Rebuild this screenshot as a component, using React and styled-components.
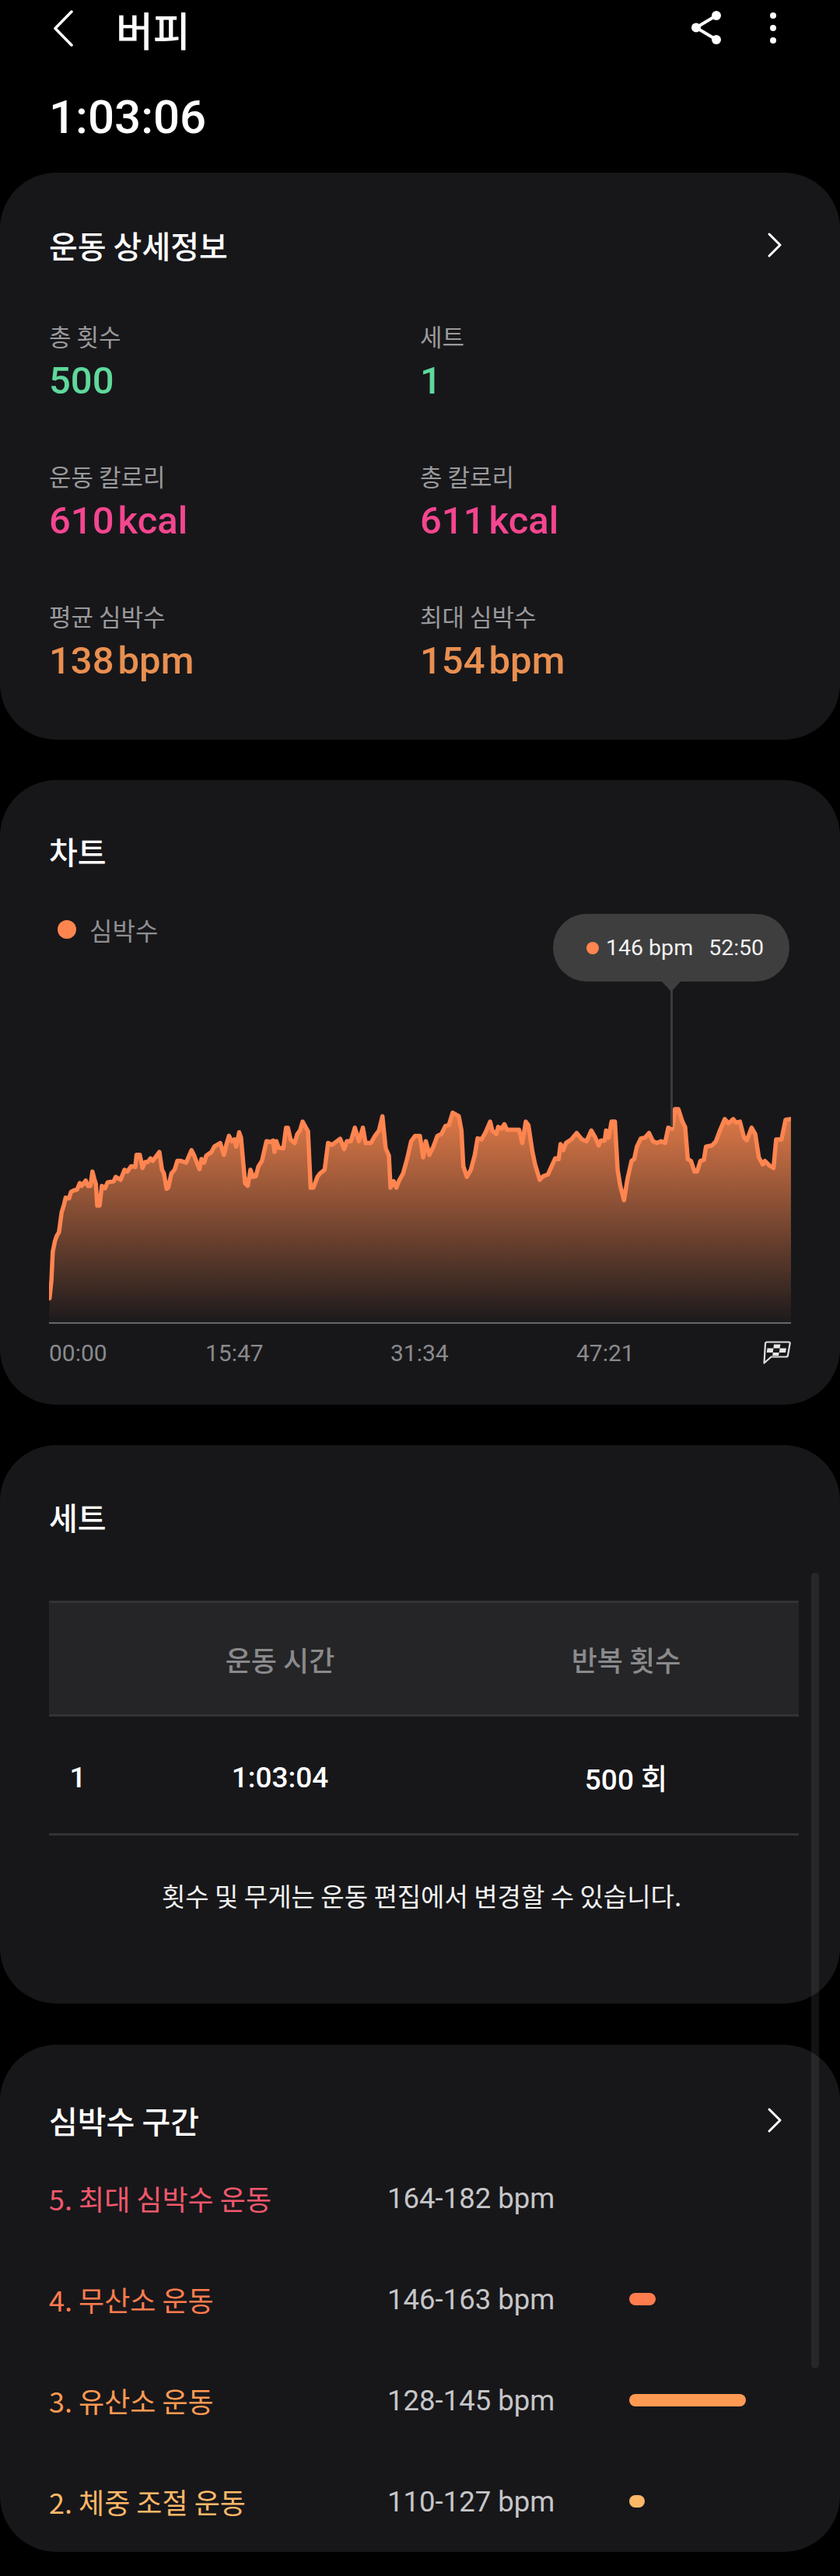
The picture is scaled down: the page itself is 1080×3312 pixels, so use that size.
import React from 'react';
import styled, { createGlobalStyle } from 'styled-components';

const KR = `"Noto Sans CJK KR", "Noto Sans", sans-serif`;
const NUM = `Roboto, "Noto Sans CJK KR", sans-serif`;

const GlobalStyle = createGlobalStyle`
  html, body {
    margin: 0;
    padding: 0;
    background: #000;
  }
  * {
    box-sizing: border-box;
  }
`;

const Page = styled.div`
  position: relative;
  width: 1080px;
  height: 3312px;
  overflow: hidden;
  background: #000;
  font-family: ${KR};
  color: #fff;
`;

const TopBar = styled.div`
  display: flex;
  align-items: center;
  height: 80px;
  padding: 0 0 8px 69px;
`;

const ScreenTitle = styled.h1`
  margin: 3px 0 0 55px;
  font-size: 52px;
  font-weight: 500;
  line-height: 60px;
`;

const TopIcons = styled.div`
  display: flex;
  align-items: center;
  gap: 60px;
  margin-left: auto;
  padding-right: 81px;
`;

const Duration = styled.div`
  margin: 36px 0 36px 63px;
  font-family: ${NUM};
  font-size: 60px;
  font-weight: 500;
  line-height: 70px;
`;

const Card = styled.section`
  margin-bottom: ${(p) => p.$gap || 52}px;
  padding: ${(p) => p.$top}px 63px ${(p) => p.$bottom}px;
  border-radius: 72px;
  background: #17171a;
`;

const CardHeader = styled.div`
  display: flex;
  align-items: center;
  justify-content: space-between;
  height: 50px;
  padding-right: 12px;
`;

const CardTitle = styled.h2`
  margin: 0;
  font-size: 40px;
  font-weight: 500;
  line-height: 50px;
`;

const StatGrid = styled.div`
  display: grid;
  grid-template-columns: 477px 1fr;
  row-gap: 72px;
  margin-top: 72px;
`;

const Stat = styled.div`
  display: flex;
  flex-direction: column;
  gap: 8px;
`;

const StatLabel = styled.span`
  font-size: 31px;
  line-height: 40px;
  color: #9a9a9c;
`;

const StatValue = styled.span`
  display: flex;
  gap: 5px;
  font-family: ${NUM};
  font-size: 49px;
  font-weight: 500;
  line-height: 60px;
  color: ${(p) => p.$color};
`;

const ChartArea = styled.div`
  position: relative;
  margin-top: 56px;
`;

const Legend = styled.div`
  display: flex;
  align-items: center;
  gap: 17px;
  height: 40px;
  padding-left: 11px;
  font-size: 32px;
  color: #8f8f91;
`;

const Dot = styled.span`
  flex: none;
  width: ${(p) => p.$size}px;
  height: ${(p) => p.$size}px;
  border-radius: 50%;
  background: #ff8550;
`;

const Tooltip = styled.div`
  position: absolute;
  top: 0;
  left: 648px;
  display: flex;
  align-items: center;
  gap: 9px;
  width: 304px;
  height: 87px;
  padding-left: 43px;
  border-radius: 44px;
  background: #3e3e3f;
  font-family: ${NUM};
  font-size: 28.5px;
  color: #f2f2f2;

  &::after {
    content: '';
    position: absolute;
    left: 140px;
    top: 87px;
    border-left: 12px solid transparent;
    border-right: 12px solid transparent;
    border-top: 13px solid #3e3e3f;
  }
`;

const TooltipTime = styled.span`
  margin-left: 11px;
`;

const TooltipLine = styled.div`
  position: absolute;
  top: 98px;
  left: 799px;
  width: 3px;
  height: 176px;
  background: #3c3c3e;
`;

const Plot = styled.svg`
  display: block;
  margin-top: 185px;
`;

const AxisRow = styled.div`
  display: grid;
  grid-template-columns: 201px 238px 239px 240px 1fr;
  align-items: center;
  height: 40px;
  margin-top: 16px;
  font-family: ${NUM};
  font-size: 30px;
  color: #8a8a8c;
`;

const Table = styled.div`
  width: 964px;
  margin-top: 83px;
`;

const TableRow = styled.div`
  display: grid;
  grid-template-columns: 74px 446px 1fr;
  align-items: center;
  height: ${(p) => p.$height}px;
  border-bottom: 3px solid #333335;
  text-align: center;
`;

const TableHead = styled(TableRow)`
  border-top: 3px solid #333335;
  background: #252527;
  font-size: 36px;
  font-weight: 500;
  color: #8a8a8c;
`;

const TableBody = styled(TableRow)`
  padding-top: 6px;
  font-family: ${NUM};
  font-size: 37px;
  font-weight: 500;
`;

const Note = styled.p`
  margin: 57px 0 0;
  padding-left: 4px;
  font-size: 33px;
  line-height: 40px;
  text-align: center;
  color: #f2f2f2;
`;

const ZoneList = styled.div`
  margin-top: 10px;
`;

const ZoneRow = styled.div`
  display: grid;
  grid-template-columns: 435px 311px 1fr;
  align-items: center;
  height: 130px;
`;

const ZoneName = styled.span`
  font-size: 36px;
  color: ${(p) => p.$color};
`;

const ZoneRange = styled.span`
  font-family: ${NUM};
  font-size: 36.5px;
  color: #c6c6c8;
`;

const ZoneBar = styled.span`
  display: block;
  width: ${(p) => p.$width}px;
  height: 16px;
  margin-top: -1px;
  border-radius: 8px;
  background: ${(p) => p.$color};
`;

const ScrollThumb = styled.div`
  position: absolute;
  top: 2022px;
  left: 1043px;
  width: 10px;
  height: 1023px;
  border-radius: 5px;
  background: rgba(255, 255, 255, 0.07);
`;

const stats = [
  { label: '총 횟수', value: '500', color: '#5fd89b' },
  { label: '세트', value: '1', color: '#5fd89b' },
  { label: '운동 칼로리', value: '610', unit: 'kcal', color: '#f4468f' },
  { label: '총 칼로리', value: '611', unit: 'kcal', color: '#f4468f' },
  { label: '평균 심박수', value: '138', unit: 'bpm', color: '#e98f50' },
  { label: '최대 심박수', value: '154', unit: 'bpm', color: '#e98f50' },
];

const zones = [
  { name: '5. 최대 심박수 운동', range: '164-182 bpm', color: '#f2586c', bar: 0 },
  { name: '4. 무산소 운동', range: '146-163 bpm', color: '#ff7c4e', bar: 34 },
  { name: '3. 유산소 운동', range: '128-145 bpm', color: '#ff9a52', bar: 150 },
  { name: '2. 체중 조절 운동', range: '110-127 bpm', color: '#ffb868', bar: 20 },
];

// heart rate trace, read off the chart at 2.904 x 2.178 scale
const trace = [
  [185,1240],[192,1190],[197,1110],[205,1080],[212,1065],[220,1055],[230,1000],[240,975],[245,958],[258,960],
  [265,942],[275,938],[288,935],[298,917],[305,925],[320,910],[328,925],[338,925],[345,885],[352,905],
  [358,920],[363,980],[372,980],[380,925],[392,932],[402,915],[425,912],[432,900],[450,908],[465,880],
  [475,885],[490,870],[505,872],[510,838],[522,838],[532,875],[542,858],[552,858],[562,848],[570,855],
  [595,830],[605,880],[612,890],[622,933],[628,930],[640,890],[652,880],[662,855],[675,855],[695,860],
  [715,825],[725,840],[735,860],[745,878],[752,850],[762,860],[770,840],[790,830],[800,815],[822,805],
  [836,838],[845,810],[855,785],[865,800],[875,795],[882,815],[893,775],[900,790],[915,918],[925,925],
  [935,880],[945,900],[955,898],[965,870],[978,855],[995,800],[1010,802],[1020,798],[1025,830],[1032,800],
  [1040,818],[1058,820],[1068,762],[1075,762],[1085,795],[1100,805],[1110,780],[1120,770],[1130,745],[1150,772],
  [1160,930],[1170,930],[1185,900],[1195,890],[1212,880],[1225,805],[1240,810],[1270,793],[1285,822],[1295,800],
  [1310,800],[1325,762],[1340,800],[1355,762],[1365,805],[1385,805],[1400,785],[1415,770],[1428,730],[1440,820],
  [1452,840],[1458,930],[1470,912],[1480,930],[1490,910],[1505,890],[1520,850],[1535,800],[1550,785],[1568,785],
  [1580,845],[1590,800],[1603,838],[1618,815],[1633,785],[1648,780],[1663,757],[1676,755],[1690,720],[1713,730],
  [1723,770],[1730,870],[1743,900],[1758,880],[1773,838],[1783,792],[1798,795],[1813,775],[1830,745],[1838,770],
  [1853,780],[1860,760],[1873,765],[1883,752],[1893,768],[1938,768],[1950,805],[1963,745],[1973,755],[1988,830],
  [1998,865],[2015,908],[2028,898],[2046,893],[2073,848],[2086,850],[2093,808],[2103,825],[2113,805],[2133,795],
  [2153,777],[2173,795],[2190,800],[2208,770],[2223,790],[2235,812],[2243,798],[2258,798],[2263,770],[2273,790],
  [2283,745],[2296,745],[2306,880],[2316,925],[2330,965],[2343,905],[2358,855],[2368,850],[2378,815],[2393,792],
  [2408,790],[2423,777],[2438,800],[2453,805],[2468,800],[2483,805],[2495,762],[2510,765],[2520,710],[2533,710],
  [2548,745],[2558,760],[2568,850],[2580,855],[2593,885],[2603,885],[2615,855],[2628,852],[2636,815],[2658,812],
  [2673,800],[2688,770],[2706,738],[2720,750],[2738,738],[2748,748],[2763,745],[2778,790],[2788,797],[2806,762],
  [2820,780],[2833,845],[2848,865],[2856,855],[2873,868],[2888,875],[2898,795],[2918,795],[2933,740],[2953,738],
].map(([x, y]) => [+(x / 2.904 - 63).toFixed(1), +(y / 2.178 - 300).toFixed(1)]);

const linePath = 'M' + trace.map(([x, y]) => `${x} ${y}`).join('L');
const areaPath = `${linePath}L954 301L0 301Z`;

const Chevron = ({ left, width = 18, height = 32, stroke = 3 }) => (
  <svg width={width} height={height} viewBox={`0 0 ${width} ${height}`} fill="none">
    <path
      d={
        left
          ? `M${width - 2} 2L2 ${height / 2}L${width - 2} ${height - 2}`
          : `M2 2L${width - 2} ${height / 2}L2 ${height - 2}`
      }
      stroke="#fff"
      strokeWidth={stroke}
      strokeLinecap="round"
      strokeLinejoin="round"
    />
  </svg>
);

const ShareIcon = () => (
  <svg width="40" height="44" viewBox="0 0 40 44" fill="#fff">
    <path d="M32 6L6 21.500L32 37" fill="none" stroke="#fff" strokeWidth="4" />
    <circle cx="32" cy="6" r="6" />
    <circle cx="6" cy="21.500" r="6" />
    <circle cx="32" cy="37" r="6" />
  </svg>
);

const MoreIcon = () => (
  <svg width="10" height="44" viewBox="0 0 10 44" fill="#fff">
    <circle cx="5" cy="6" r="4" />
    <circle cx="5" cy="22" r="4" />
    <circle cx="5" cy="38" r="4" />
  </svg>
);

const FinishFlag = () => (
  <svg width="36" height="30" viewBox="0 0 36 30">
    <path d="M5 1.500H33Q35 1.500 34.600 3.500L32 18.500Q31.700 20.500 29.500 20.500H10.500L1.500 28.500L3 3.500Q3.200 1.500 5 1.500Z" fill="#17171a" stroke="#ddd" strokeWidth="2.200" strokeLinejoin="round" />
    <path d="M14 4.500H22.500L21.600 9.500H13.400ZM5.500 9.500H13.400L12.700 15H4.800ZM21.600 9.500H30L29 15H20.800ZM12.700 15H20.800L20 19H12.200Z" fill="#e8e8e8" />
  </svg>
);

export default function App() {
  return (
    <Page>
      <GlobalStyle />
      <TopBar>
        <Chevron left width={25} height={47} stroke={3.5} />
        <ScreenTitle>버피</ScreenTitle>
        <TopIcons>
          <ShareIcon />
          <MoreIcon />
        </TopIcons>
      </TopBar>
      <Duration>1:03:06</Duration>

      <Card $top={68} $bottom={71}>
        <CardHeader>
          <CardTitle>운동 상세정보</CardTitle>
          <Chevron />
        </CardHeader>
        <StatGrid>
          {stats.map((s) => (
            <Stat key={s.label}>
              <StatLabel>{s.label}</StatLabel>
              <StatValue $color={s.color}>
                <span>{s.value}</span>
                {s.unit && <span>{s.unit}</span>}
              </StatValue>
            </Stat>
          ))}
        </StatGrid>
      </Card>

      <Card $top={66} $bottom={47}>
        <CardHeader>
          <CardTitle>차트</CardTitle>
        </CardHeader>
        <ChartArea>
          <Legend>
            <Dot $size={24} />
            심박수
          </Legend>
          <Tooltip>
            <Dot $size={16} />
            146 bpm
            <TooltipTime>52:50</TooltipTime>
          </Tooltip>
          <TooltipLine />
          <Plot width="954" height="303" viewBox="0 0 954 303">
            <defs>
              <linearGradient id="hrFill" x1="0" y1="30" x2="0" y2="300" gradientUnits="userSpaceOnUse">
                <stop offset="0" stopColor="#e07a48" />
                <stop offset="1" stopColor="#1c1a1c" />
              </linearGradient>
            </defs>
            <path d={areaPath} fill="url(#hrFill)" />
            <path d={linePath} fill="none" stroke="#ff8550" strokeWidth="5.5" strokeLinejoin="round" strokeLinecap="round" />
            <rect x="0" y="300" width="954" height="2" fill="#66666a" />
          </Plot>
          <AxisRow>
            <span>00:00</span>
            <span>15:47</span>
            <span>31:34</span>
            <span>47:21</span>
            <FinishFlag />
          </AxisRow>
        </ChartArea>
      </Card>

      <Card $top={67} $bottom={119} $gap={53}>
        <CardHeader>
          <CardTitle>세트</CardTitle>
        </CardHeader>
        <Table>
          <TableHead $height={149}>
            <span />
            <span>운동 시간</span>
            <span>반복 횟수</span>
          </TableHead>
          <TableBody $height={153}>
            <span>1</span>
            <span>1:03:04</span>
            <span>500 회</span>
          </TableBody>
        </Table>
        <Note>횟수 및 무게는 운동 편집에서 변경할 수 있습니다.</Note>
      </Card>

      <Card $top={72} $bottom={0} $gap={1}>
        <CardHeader>
          <CardTitle>심박수 구간</CardTitle>
          <Chevron />
        </CardHeader>
        <ZoneList>
          {zones.map((z) => (
            <ZoneRow key={z.name}>
              <ZoneName $color={z.color}>{z.name}</ZoneName>
              <ZoneRange>{z.range}</ZoneRange>
              {z.bar > 0 && <ZoneBar $width={z.bar} $color={z.color} />}
            </ZoneRow>
          ))}
        </ZoneList>
      </Card>

      <ScrollThumb />
    </Page>
  );
}
